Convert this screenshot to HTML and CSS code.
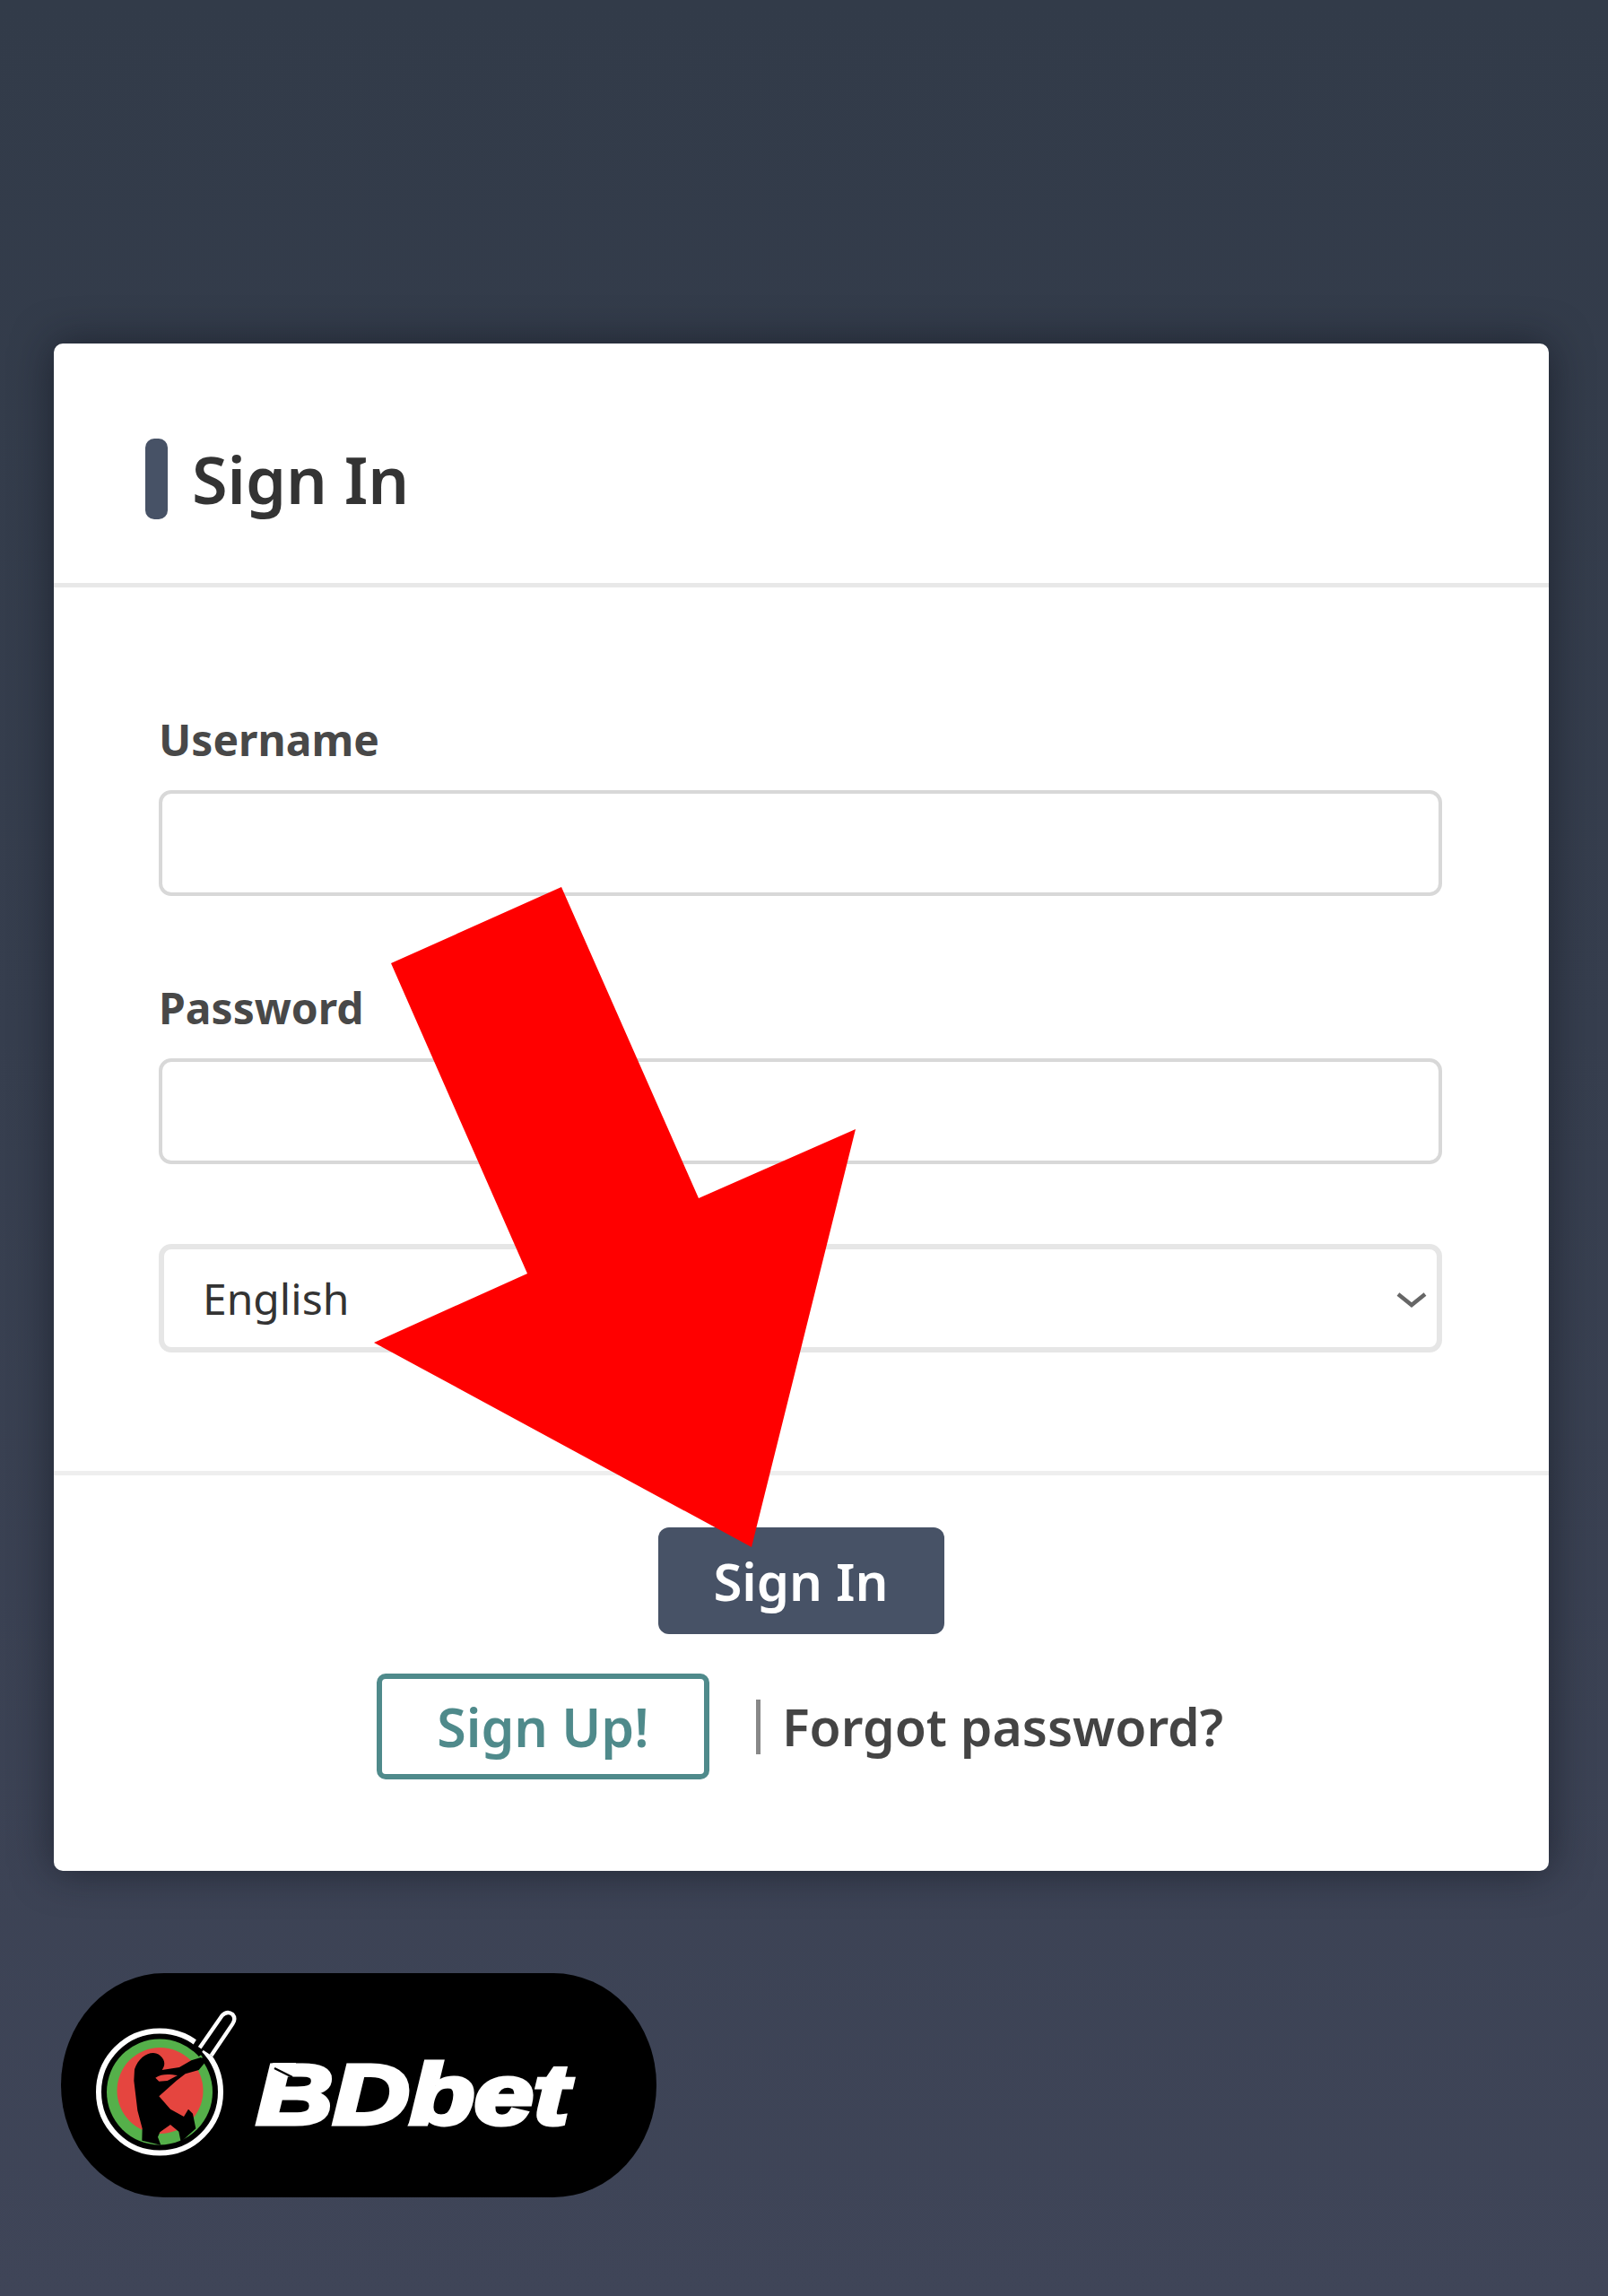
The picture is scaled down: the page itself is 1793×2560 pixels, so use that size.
FILE: index.html
```html
<!DOCTYPE html>
<html lang="en">
<head>
<meta charset="utf-8">
<title>Sign In</title>
<link rel="stylesheet" href="styles.css">
</head>
<body>
<main class="card">
  <header class="card-head">
    <span class="accent"></span>
    <h1 class="title">Sign In</h1>
  </header>
  <form class="card-body">
    <div class="field">
      <label class="label" for="user">Username</label>
      <input class="control" id="user" type="text">
    </div>
    <div class="field">
      <label class="label" for="pass">Password</label>
      <input class="control" id="pass" type="password">
    </div>
    <div class="select-wrap">
      <select class="control select" aria-label="Language">
        <option>English</option>
      </select>
      <svg class="chevron" viewBox="0 0 34 18" aria-hidden="true"><path d="M2 3l15 12L32 3" fill="none" stroke="#666" stroke-width="4.5"/></svg>
    </div>
  </form>
  <footer class="card-foot">
    <button class="btn-primary" type="button">Sign In</button>
    <div class="links">
      <a class="btn-outline">Sign Up!</a>
      <span class="pipe"></span>
      <a class="forgot">Forgot password?</a>
    </div>
  </footer>
</main>

<div class="brand">
  <svg class="brand-art" viewBox="68 2200 664 250" role="img" aria-label="BDbet">
    <circle cx="178" cy="2332.5" r="68" fill="none" stroke="#fff" stroke-width="6"/>
    <circle cx="178" cy="2332.5" r="59" fill="#55b04a"/>
    <circle cx="178.500" cy="2331" r="48" fill="#e5453f"/>
    <g transform="translate(90 2220) scale(.33333)">
      <path d="M396 215L425 180 395 150 370 190Z" fill="#000"/>
      <path d="M398 190L473 82Q490 64 508 78 520 92 508 110L437 215" fill="#000" stroke="#fff" stroke-width="13" stroke-linejoin="round"/>
      <path d="M375 240L405 218" stroke="#55b04a" stroke-width="10"/>
      <path d="M180 262C195 215 240 195 265 215 285 232 282 250 272 264L330 255 370 232 402 222 418 236 395 264 350 277 320 300 262 352 300 395 345 420 360 395 375 410 385 460 335 505 328 470 300 447 265 472 258 488 268 515 205 500 206 460 190 400 178 300Z" fill="#000"/>
      <path d="M250 290C270 275 300 278 324 282L290 300 262 302Z" fill="#e5453f"/>
    </g>
    <text class="brand-name" x="286" y="2368" textLength="348" lengthAdjust="spacingAndGlyphs">BDbet</text>
    <path d="M303 2300L330 2300 328 2312Z" fill="#fff"/>
    <path d="M306 2306L326 2316" stroke="#000" stroke-width="2.500"/>
  </svg>
</div>

<svg class="arrow" viewBox="0 0 1793 2560" aria-hidden="true">
  <polygon points="626,989 436,1074 588,1420 417,1497 838,1725 954,1259 779,1336" fill="#ff0000"/>
</svg>
</body>
</html>
```

FILE: styles.css
```css
* { box-sizing: border-box; }

html, body { margin: 0; height: 2560px; }

body {
  position: relative;
  overflow: hidden;
  padding: 383px 66px 0 60px;
  background: linear-gradient(180deg, #323b49 0%, #363e4e 45%, #3f4558 100%);
  font-family: "Noto Sans", "Open Sans", sans-serif;
}

.card {
  height: 1703px;
  display: flex;
  flex-direction: column;
  background: #fff;
  border-radius: 10px;
  box-shadow: 0 0 45px rgba(15, 18, 28, .6);
}

.card-head {
  height: 272px;
  flex: none;
  display: flex;
  align-items: center;
  gap: 27px;
  padding: 34px 0 0 102px;
  border-bottom: 5px solid #e8e8e8;
}

.accent {
  width: 25px;
  height: 90px;
  border-radius: 10px;
  background: #475266;
}

.title {
  margin: 0;
  font-size: 72px;
  line-height: 90px;
  font-weight: 600;
  color: #333;
}

.card-body {
  flex: none;
  height: 985px;
  padding: 0 119px 0 117px;
  display: flex;
  flex-direction: column;
}

.field { display: flex; flex-direction: column; }

.field:first-child { padding-top: 142px; }
.field + .field { padding-top: 97px; }

.label {
  height: 84px;
  font-size: 48px;
  line-height: 55px;
  font-weight: 700;
  color: #484848;
}

.control {
  display: block;
  width: 100%;
  height: 118px;
  padding: 0 43px;
  border: 4px solid #d8d8d8;
  border-radius: 14px;
  background: #fff;
  font-family: inherit;
  font-size: 48px;
  color: #333;
  outline: none;
  appearance: none;
}

.select-wrap { position: relative; margin-top: 89px; }

.select { height: 121px; border-width: 6px; border-color: #e6e6e6; }

.chevron {
  position: absolute;
  top: 53px;
  right: 17px;
  width: 34px;
  height: 18px;
}

.card-foot {
  flex: 1;
  display: flex;
  flex-direction: column;
  align-items: center;
  border-top: 5px solid #eee;
  padding-top: 58px;
}

.btn-primary {
  width: 319px;
  height: 119px;
  margin-left: -1px;
  border: 0;
  border-radius: 12px;
  background: #475266;
  color: #fff;
  font-family: inherit;
  font-size: 58px;
  font-weight: 600;
}

.links {
  display: flex;
  align-items: center;
  margin-top: 44px;
  margin-left: -3px;
}

.btn-outline {
  width: 371px;
  height: 118px;
  display: flex;
  align-items: center;
  justify-content: center;
  border: 6px solid #4f8a8b;
  border-radius: 10px;
  font-size: 59px;
  font-weight: 600;
  color: #4f8a8b;
}

.pipe {
  width: 5px;
  height: 61px;
  margin: 0 24px 0 52px;
  background: #888;
}

.forgot {
  font-size: 57px;
  font-weight: 600;
  color: #444;
}

.brand {
  width: 664px;
  height: 250px;
  margin: 114px 0 0 8px;
  border-radius: 115px / 125px;
  background: #000;
}

.brand-art { display: block; width: 100%; height: 100%; }

.brand-name {
  font-family: "Liberation Sans", sans-serif;
  font-size: 94px;
  font-weight: 700;
  font-style: italic;
  fill: #fff;
  stroke: #fff;
  stroke-width: 5px;
}

.arrow {
  position: absolute;
  top: 0;
  left: 0;
  width: 1793px;
  height: 2560px;
  pointer-events: none;
}
```
